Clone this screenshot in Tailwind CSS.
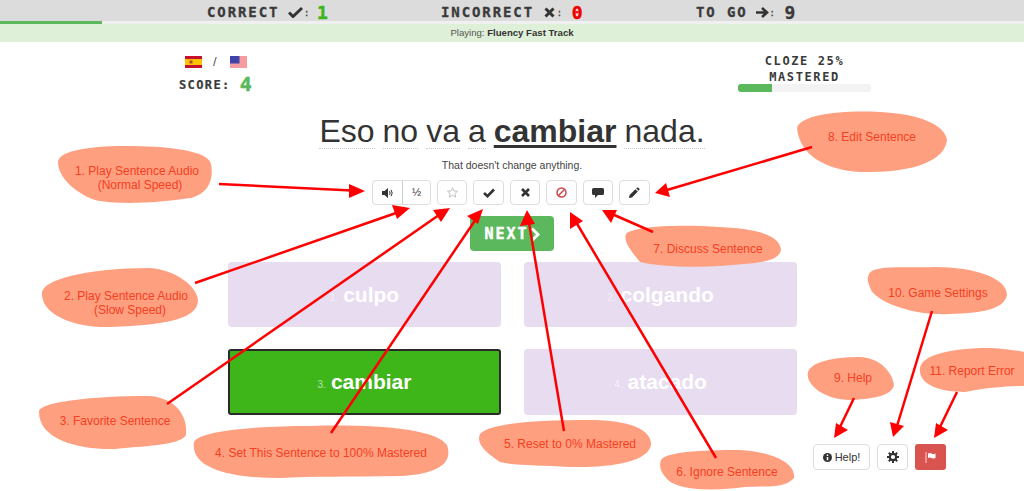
<!DOCTYPE html>
<html lang="en">
<head>
  <meta charset="UTF-8">
  <title>Fluency Fast Track</title>
  <script src="https://cdn.jsdelivr.net/npm/@tailwindcss/browser@4"></script>
</head>
<body class="bg-white overflow-hidden font-['Liberation_Sans',sans-serif] text-[#333]">
<div class="relative w-[1024px] h-[491px] overflow-hidden">

  <!-- top stats -->
  <div class="h-[21px] pt-[3px] bg-[#dcdcdc] flex items-center pl-[207px] font-['DejaVu_Sans_Mono',monospace] font-bold text-[14px] tracking-[1.9px] text-[#3a3a3a] [-webkit-text-stroke:0.3px_#3a3a3a]">
    <div class="w-[234px] flex items-center">
      <span>CORRECT</span>
      <svg class="ml-[9px] w-[15px] h-[12px]" viewBox="0 0 15 12"><path d="M1 6.5 5 10.5 14 2" fill="none" stroke="#333" stroke-width="3"/></svg>
      <span class="text-[8px] ml-[1px] mt-[4px] font-normal">:</span>
      <span class="ml-[6px] text-[18px] text-[#3eb519] [-webkit-text-stroke:0.5px_#3eb519]">1</span>
    </div>
    <div class="w-[255px] flex items-center">
      <span>INCORRECT</span>
      <svg class="ml-[10px] w-[11px] h-[11px]" viewBox="0 0 11 11"><path d="M1.5 1.5 9.5 9.5M9.5 1.5 1.5 9.5" fill="none" stroke="#333" stroke-width="3"/></svg>
      <span class="text-[8px] ml-[2px] mt-[4px] font-normal">:</span>
      <span class="ml-[8px] text-[18px] text-[#ee0000] [-webkit-text-stroke:0.5px_#ee0000]">0</span>
    </div>
    <div class="flex items-center">
      <span>TO GO</span>
      <svg class="ml-[8px] w-[13px] h-[11px]" viewBox="0 0 13 11"><path d="M0 5.5H10M6 1 11 5.5 6 10" fill="none" stroke="#333" stroke-width="2.6"/></svg>
      <span class="text-[8px] ml-[1px] mt-[4px] font-normal">:</span>
      <span class="ml-[8px] text-[18px] text-[#3a3a3a]">9</span>
    </div>
  </div>
  <div class="h-[3px] bg-[#f0f0f0]"><div class="h-[3px] w-[102px] bg-[#5cb85c]"></div></div>
  <div class="h-[18px] bg-[#dff0d8] text-center text-[9.6px] leading-[18px] text-[#555]">Playing: <span class="font-bold text-[#333]">Fluency Fast Track</span></div>

  <!-- score + mastery -->
  <div class="flex h-[58px]">
    <div class="w-[738px] pl-[179px] pt-[14px]">
      <div class="flex items-center pl-[6px] h-[12px]">
        <svg class="w-[17px] h-[12px]" viewBox="0 0 17 12"><rect width="17" height="12" fill="#c8102e"/><rect y="3" width="17" height="6" fill="#fcc400"/><rect x="4.5" y="4.5" width="3" height="3" fill="#b5482a"/></svg>
        <span class="ml-[11px] w-[6px] text-[13px] text-[#555]">/</span>
        <svg class="ml-[11px] w-[17px] h-[12px]" viewBox="0 0 17 12"><rect width="17" height="12" fill="#fff"/><path d="M0 1H17M0 3H17M0 5H17M0 7H17M0 9H17M0 11H17" stroke="#ee3b44" stroke-width="1"/><rect width="9.5" height="7.5" fill="#3f45a8"/></svg>
      </div>
      <div class="flex items-center mt-[1px] font-['DejaVu_Sans_Mono',monospace] font-bold text-[12px] tracking-[1.4px] text-[#3a3a3a] [-webkit-text-stroke:0.2px_#3a3a3a]">
        <span class="mt-[2px]">SCORE:</span>
        <span class="ml-[9px] text-[20px] text-[#5cb85c] [-webkit-text-stroke:0.5px_#5cb85c]">4</span>
      </div>
    </div>
    <div class="w-[133px] pt-[11px] text-center font-['DejaVu_Sans_Mono',monospace] font-bold text-[12px] leading-[16px] tracking-[1.6px] text-[#3a3a3a]">
      <div>CLOZE 25%</div>
      <div>MASTERED</div>
      <div class="h-[8px] mt-[-1px] rounded-[3px] bg-[#f3f3f3]"><div class="h-[8px] w-[34px] rounded-l-[3px] bg-[#5cb85c]"></div></div>
    </div>
  </div>

  <!-- sentence -->
  <div class="mt-[9px] flex justify-center gap-[8px] text-[32px] leading-[44px] h-[40px] text-[#333]">
    <span class="border-b border-dotted border-[#ccc]">Eso</span>
    <span class="border-b border-dotted border-[#ccc]">no</span>
    <span class="border-b border-dotted border-[#ccc]">va</span>
    <span class="border-b border-dotted border-[#ccc]">a</span>
    <span class="font-bold underline decoration-[3px] underline-offset-[3px]">cambiar</span>
    <span class="border-b border-dotted border-[#ccc]">nada.</span>
  </div>
  <div class="mt-[9px] text-center text-[10.5px] leading-[14px] text-[#444]">That doesn't change anything.</div>

  <!-- sentence buttons -->
  <div class="mt-[8px] pl-[372px] flex h-[25px]">
    <div class="flex h-[25px] w-[59px] rounded-[4px] border border-[#ddd] bg-white">
      <div class="w-[30px] border-r border-[#ccc] flex items-center justify-center">
        <svg class="w-[12px] h-[10px]" viewBox="0 0 12 10"><path d="M0 3H2.5L6 0V10L2.5 7H0Z" fill="#333"/><path d="M7.5 3.2Q8.8 5 7.5 6.8M9 1.8Q11.4 5 9 8.2" fill="none" stroke="#333" stroke-width="1"/></svg>
      </div>
      <div class="flex-1 flex items-center justify-center text-[11px] text-[#333]">½</div>
    </div>
    <div class="ml-[6px] w-[30px] rounded-[4px] border border-[#ddd] flex items-center justify-center">
      <svg class="w-[11px] h-[11px]" viewBox="0 0 12 12"><path d="M6 .8 7.6 4.3 11.4 4.7 8.6 7.2 9.4 11 6 9.1 2.6 11 3.4 7.2.6 4.7 4.4 4.3Z" fill="none" stroke="#bbb" stroke-width="1"/></svg>
    </div>
    <div class="ml-[6px] w-[31px] rounded-[4px] border border-[#ddd] flex items-center justify-center">
      <svg class="w-[12px] h-[10px]" viewBox="0 0 12 10"><path d="M1 5 4.5 8.2 11 1.5" fill="none" stroke="#333" stroke-width="2.6"/></svg>
    </div>
    <div class="ml-[6px] w-[30px] rounded-[4px] border border-[#ddd] flex items-center justify-center">
      <svg class="w-[9px] h-[9px]" viewBox="0 0 9 9"><path d="M1 1 8 8M8 1 1 8" fill="none" stroke="#333" stroke-width="2.6"/></svg>
    </div>
    <div class="ml-[6px] w-[31px] rounded-[4px] border border-[#ddd] flex items-center justify-center">
      <svg class="w-[11px] h-[11px]" viewBox="0 0 11 11"><circle cx="5.5" cy="5.5" r="4.5" fill="none" stroke="#c9474a" stroke-width="1.5"/><path d="M2.3 8.7 8.7 2.3" stroke="#c9474a" stroke-width="1.5"/></svg>
    </div>
    <div class="ml-[6px] w-[30px] rounded-[4px] border border-[#ddd] flex items-center justify-center">
      <svg class="w-[12px] h-[10px]" viewBox="0 0 12 10"><path d="M1.5 0H10.5Q12 0 12 1.5V5.5Q12 7 10.5 7H6L3 10V7H1.5Q0 7 0 5.5V1.5Q0 0 1.5 0Z" fill="#333"/></svg>
    </div>
    <div class="ml-[6px] w-[31px] rounded-[4px] border border-[#ddd] flex items-center justify-center">
      <svg class="w-[11px] h-[11px]" viewBox="0 0 11 11"><path d="M0 11 .6 8 6.4 2.2 8.8 4.6 3 10.4Z" fill="#333"/><path d="M7.2 1.4 7.8.8Q8.6 0 9.4 .8L10.2 1.6Q11 2.4 10.2 3.2L9.6 3.8Z" fill="#333"/></svg>
    </div>
  </div>

  <!-- next -->
  <div class="mt-[11px] ml-[470px] w-[84px] h-[35px] pt-[2px] rounded-[4px] bg-[#5cb85c] flex items-center justify-center font-['DejaVu_Sans_Mono',monospace] font-bold text-[15px] tracking-[2px] text-white [-webkit-text-stroke:0.5px_#fff]">
    <span>NEXT</span>
    <svg class="ml-[1px] w-[10px] h-[15px]" viewBox="0 0 10 15"><path d="M2 1.5 8 7.5 2 13.5" fill="none" stroke="#fff" stroke-width="3"/></svg>
  </div>

  <!-- answers -->
  <div class="mt-[11px] ml-[228px] w-[569px] grid grid-cols-2 gap-x-[23px] gap-y-[22px]">
    <div class="h-[65px] rounded-[4px] bg-[#e8dcf0] flex items-center justify-center text-white font-bold text-[21px]"><span class="text-[10px] font-normal opacity-60 mr-[5px] mt-[5px]">1.</span>culpo</div>
    <div class="h-[65px] rounded-[4px] bg-[#e8dcf0] flex items-center justify-center text-white font-bold text-[21px]"><span class="text-[10px] font-normal opacity-60 mr-[5px] mt-[5px]">2.</span>colgando</div>
    <div class="h-[66px] rounded-[3px] bg-[#3eb519] border-2 border-[#2a2a2a] flex items-center justify-center text-white font-bold text-[21px]"><span class="text-[10px] font-normal opacity-60 mr-[5px] mt-[5px]">3.</span>cambiar</div>
    <div class="h-[66px] rounded-[4px] bg-[#e8dcf0] flex items-center justify-center text-white font-bold text-[21px]"><span class="text-[10px] font-normal opacity-60 mr-[5px] mt-[5px]">4.</span>atacado</div>
  </div>

  <!-- help buttons -->
  <div class="mt-[29px] pl-[813px] flex h-[26px]">
    <div class="w-[57px] rounded-[4px] border border-[#ddd] flex items-center justify-center text-[11px] text-[#333]">
      <svg class="w-[9px] h-[9px] mr-[3px]" viewBox="0 0 9 9"><circle cx="4.5" cy="4.5" r="4.5" fill="#333"/><path d="M4.5 1.6V3M4.5 3.9V7.2" stroke="#fff" stroke-width="1.5"/></svg>
      Help!
    </div>
    <div class="ml-[7px] w-[31px] rounded-[4px] border border-[#ddd] flex items-center justify-center">
      <svg class="w-[12px] h-[12px]" viewBox="0 0 12 12"><circle cx="6" cy="6" r="3.2" fill="none" stroke="#333" stroke-width="2.2"/><path d="M6 0V2.5M6 9.5V12M0 6H2.5M9.5 6H12M1.8 1.8 3.5 3.5M8.5 8.5 10.2 10.2M10.2 1.8 8.5 3.5M3.5 8.5 1.8 10.2" stroke="#333" stroke-width="2"/></svg>
    </div>
    <div class="ml-[7px] w-[31px] rounded-[3px] bg-[#d9534f] flex items-center justify-center">
      <svg class="w-[11px] h-[11px]" viewBox="0 0 11 11"><path d="M1 0V11" stroke="#f6d5d4" stroke-width="1"/><path d="M3 1.5Q5 .5 6.5 1.5T10.5 1.5V6Q8 7 6.5 6T3 6Z" fill="#fff"/></svg>
    </div>
  </div>

  <!-- hand-drawn annotations on top of the screenshot -->
  <svg class="absolute inset-0 w-[1024px] h-[491px]" viewBox="0 0 1024 491">
    <g fill="#fe9f80">
      <path d="M58 162C58 152 85 146 125 146C165 146 208 150 211 164C214 180 208 194 190 198C160 203 115 205 95 200C80 195 58 180 58 162Z"/>
      <path d="M42 292C44 280 85 268 150 268C175 270 196 285 198 300C198 318 170 325 110 327C75 328 40 315 42 292Z"/>
      <path d="M39 411C42 402 90 396 150 396C175 398 188 415 186 435C180 446 140 446 115 449C80 450 38 440 39 411Z"/>
      <path d="M194 442C200 430 260 426 310 426C370 424 435 428 447 445C453 462 440 474 400 476C350 477 310 476 280 478C235 478 190 470 194 442Z"/>
      <path d="M480 434C488 424 530 420 590 420C630 420 652 430 651 445C648 462 610 468 570 467C540 465 515 466 500 462C490 455 475 445 480 434Z"/>
      <path d="M661 460C666 452 700 450 740 450C770 452 796 462 794 478C785 488 770 486 745 487C715 491 680 491 668 480C660 472 659 466 661 460Z"/>
      <path d="M626 234C632 226 680 224 720 227C760 229 780 236 781 250C778 264 750 263 720 266C690 268 655 266 640 262C632 252 623 242 626 234Z"/>
      <path d="M797 128C800 115 840 110 880 112C920 114 945 125 947 140C945 160 915 172 870 172C835 173 800 160 797 128Z"/>
      <path d="M808 372C812 360 840 357 860 357C880 358 892 372 894 385C892 395 875 399 850 400C825 400 805 385 808 372Z"/>
      <path d="M869 274C874 265 900 268 935 267C975 267 1007 278 1007 295C1004 310 980 313 950 314C920 316 880 305 871 290C869 284 866 280 869 274Z"/>
      <path d="M920 368C922 355 950 348 990 348C1010 349 1024 352 1024 352V386C1010 386 985 388 965 392C940 392 918 385 920 368Z"/>
    </g>
    <g stroke="#f00" stroke-width="2.5" fill="#f00">
      <path d="M219 184 352 190.5"/><path d="M365 191 349 184 349 198Z" stroke="none"/>
      <path d="M195 283 396 213"/><path d="M410 208 392 205 397 219Z" stroke="none"/>
      <path d="M167 404 439 215"/><path d="M450 208 433 210 441 222Z" stroke="none"/>
      <path d="M331 433 476 219"/><path d="M483 209 467 216 478 224Z" stroke="none"/>
      <path d="M564 431 529 223"/><path d="M527 210 520 226 535 224Z" stroke="none"/>
      <path d="M716 458 576 222"/><path d="M570 212 570 229 583 221Z" stroke="none"/>
      <path d="M653 232 612 214"/><path d="M602 210 611 223 617 210Z" stroke="none"/>
      <path d="M812 147 667 190"/><path d="M655 193 670 197 666 183Z" stroke="none"/>
      <path d="M854 398 840 427"/><path d="M834 438 848 430 836 423Z" stroke="none"/>
      <path d="M932 311 897 426"/><path d="M893 437 904 426 890 422Z" stroke="none"/>
      <path d="M957 392 940 427"/><path d="M934 438 948 430 936 423Z" stroke="none"/>
    </g>
    <g fill="#f5401f" font-size="12" text-anchor="middle" class="font-['Liberation_Sans',sans-serif]">
      <text x="137" y="175">1. Play Sentence Audio</text>
      <text x="140" y="189">(Normal Speed)</text>
      <text x="126" y="300">2. Play Sentence Audio</text>
      <text x="130" y="314">(Slow Speed)</text>
      <text x="115" y="425">3. Favorite Sentence</text>
      <text x="321" y="457">4. Set This Sentence to 100% Mastered</text>
      <text x="570" y="448">5. Reset to 0% Mastered</text>
      <text x="727" y="476">6. Ignore Sentence</text>
      <text x="708" y="253">7. Discuss Sentence</text>
      <text x="872" y="141">8. Edit Sentence</text>
      <text x="853" y="382">9. Help</text>
      <text x="938" y="297">10. Game Settings</text>
      <text x="972" y="375">11. Report Error</text>
    </g>
  </svg>
</div>
</body>
</html>
